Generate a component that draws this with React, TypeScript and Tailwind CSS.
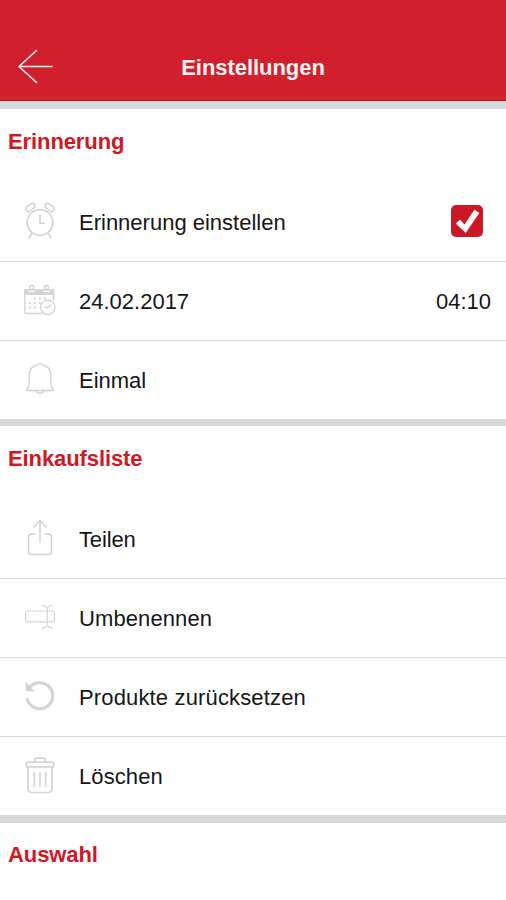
import type { ReactNode } from "react";

const stroke = {
  fill: "none",
  stroke: "currentColor",
  strokeLinecap: "round" as const,
  strokeLinejoin: "round" as const,
};

function Icon({ children, width = 1.5 }: { children: ReactNode; width?: number }) {
  return (
    <svg
      viewBox="0 0 40 40"
      className="h-10 w-10 shrink-0 text-[#d3d3d3]"
      strokeWidth={width}
      {...stroke}
      aria-hidden="true"
    >
      {children}
    </svg>
  );
}

const AlarmIcon = () => (
  <Icon width={1.6}>
    <g transform="translate(0 -0.800)">
      <circle cx="20" cy="21.3" r="12.8" />
      <path d="M20 13.500v8.500h4.500M12 32c-1.500 1.500-2.700 3.200-3 5.200M28 32c1.500 1.500 2.700 3.200 3 5.200" />
      <rect x="5.300" y="3.700" width="10" height="5.200" rx="2.400" transform="rotate(-38 10.300 6.300)" />
      <rect x="24.700" y="3.700" width="10" height="5.200" rx="2.400" transform="rotate(38 29.700 6.300)" />
    </g>
  </Icon>
);

const CalendarIcon = () => (
  <Icon width={1.4}>
    <path d="M22 32.500H6.800a2 2 0 0 1-2-2V9h28.700v10" />
    <path d="M4 8.500h4.500v2.500h6.500V8.500h8V11h6.500V8.500h4.700v5.500H4Z" fill="currentColor" stroke="none" />
    <circle cx="11.800" cy="6.500" r="2" fill="white" />
    <circle cx="26.500" cy="6.500" r="2" fill="white" />
    <path
      d="M14 17.500h2M19 17.500h2M24 17.500h2M9 22h2M14 22h2M19 22h1.500M9 26.500h2M14 26.500h2"
      strokeWidth="2.200"
      strokeLinecap="butt"
    />
    <circle cx="27.700" cy="26.300" r="7.200" fill="white" />
    <path d="m24.800 25.500 2.500 1.500 3.700-3.200" />
  </Icon>
);

const BellIcon = () => (
  <Icon width={1.4}>
    <path d="M16.800 5c1-1.900 5.400-1.900 6.400 0 4.800 1.400 7.600 5 7.600 9.700v7.500c0 3.800.900 5.500 2.700 8.300h-27C8.300 27.700 9.200 26 9.200 22.200v-7.500c0-4.700 2.800-8.300 7.600-9.700Z" />
    <path d="M16.500 31a3.600 3.200 0 0 0 7 0" />
  </Icon>
);

const ShareIcon = () => (
  <Icon width={1.5}>
    <path d="M15 15h-3.500a3 3 0 0 0-3 3v14.500a3 3 0 0 0 3 3h17a3 3 0 0 0 3-3V18a3 3 0 0 0-3-3H25M20 23.500V1.800M13.800 8l6.200-6.300L26.200 8" />
  </Icon>
);

const RenameIcon = () => (
  <Icon width={1.2}>
    <rect x="5.500" y="13" width="29" height="10.800" rx="2" />
    <path d="M27.200 10v17.500M22.500 7.300c2.200 0 3.200.800 4.700 2.700 1.500-1.900 2.500-2.700 4.700-2.700M22.500 29.800c2.500 0 3.500-.700 4.700-2.300 1.200 1.600 2.200 2.300 4.700 2.300" />
  </Icon>
);

const ResetIcon = () => (
  <Icon width={3.2}>
    <path d="M10 10.100A13 13 0 1 1 7 21.300" strokeLinecap="butt" />
    <path d="M5.600 5v9.300h9.300Z" fill="currentColor" stroke="none" />
  </Icon>
);

const TrashIcon = () => (
  <Icon width={1.700}>
    <rect x="6" y="6.200" width="28" height="4.600" rx="2" />
    <path d="M15 6V3.800a1.700 1.700 0 0 1 1.700-1.700h6.600A1.700 1.700 0 0 1 25 3.800V6M8 11v21.500a4 4 0 0 0 4 4h16a4 4 0 0 0 4-4V11M14.300 17v13.500M20 17v13.500M25.700 17v13.500" />
  </Icon>
);

function Row({ icon, label, trailing }: { icon: ReactNode; label: ReactNode; trailing?: ReactNode }) {
  return (
    <li className="flex h-[79px] items-center border-b border-[#d9d9d9] pl-5 last:h-[78px] last:border-b-0">
      {icon}
      <span className="ml-[19px] grow">{label}</span>
      {trailing}
    </li>
  );
}

function SectionTitle({ children }: { children: ReactNode }) {
  return (
    <h2 className="flex h-[74px] shrink-0 items-start pt-[16px] pl-[8px] text-[22px] leading-[33px] font-bold tracking-[-0.1px] text-[#d3161f]">
      {children}
    </h2>
  );
}

export default function App() {
  return (
    <div className="flex h-[900px] w-full flex-col overflow-hidden bg-white font-['Liberation_Sans',Arial,sans-serif] text-[22px] text-[#161616]">
      <header className="relative flex h-[101px] shrink-0 items-end justify-center border-b border-[#c80f20] bg-[#d11f2e] pb-[16px]">
        <button aria-label="Zurück" className="absolute bottom-[15px] left-[16px] text-[#fff0f0]">
          <svg viewBox="0 0 40 36" className="h-9 w-10" strokeWidth="1.600" {...stroke}>
            <path d="M36 17.500H3M20.500 1.500 3 17.500l17.500 16" />
          </svg>
        </button>
        <h1 className="leading-[32px] font-bold tracking-[-0.05px] text-[#fff3f3]">Einstellungen</h1>
      </header>

      <section className="shrink-0 border-t-8 border-b-[7px] border-[#d8d8d8]">
        <SectionTitle>Erinnerung</SectionTitle>
        <ul>
          <Row
            icon={<AlarmIcon />}
            label="Erinnerung einstellen"
            trailing={
              <span
                role="checkbox"
                aria-checked="true"
                aria-label="Erinnerung einstellen"
                className="mr-[23px] h-8 w-8 -translate-y-px rounded-[5px] bg-[#cc1826]"
              >
                <svg viewBox="0 0 32 32" className="h-8 w-8" fill="white">
                  <path d="M5 18.500 9 15l4.500 5L23.500 5l4.500 3-13.300 19.500Z" stroke="white" strokeWidth="0.600" strokeLinejoin="round" />
                </svg>
              </span>
            }
          />
          <Row icon={<CalendarIcon />} label="24.02.2017" trailing={<time className="mr-[15px]">04:10</time>} />
          <Row icon={<BellIcon />} label="Einmal" />
        </ul>
      </section>

      <section className="shrink-0 border-b-8 border-[#d8d8d8]">
        <SectionTitle>Einkaufsliste</SectionTitle>
        <ul>
          <Row icon={<ShareIcon />} label={<span className="tracking-[-0.15px]">Teilen</span>} />
          <Row icon={<RenameIcon />} label={<span className="tracking-[0.1px]">Umbenennen</span>} />
          <Row icon={<ResetIcon />} label={<span className="tracking-[0.15px]">Produkte zurücksetzen</span>} />
          <Row icon={<TrashIcon />} label={<span className="tracking-[0.1px]">Löschen</span>} />
        </ul>
      </section>

      <section className="-mt-px">
        <SectionTitle>Auswahl</SectionTitle>
      </section>
    </div>
  );
}
